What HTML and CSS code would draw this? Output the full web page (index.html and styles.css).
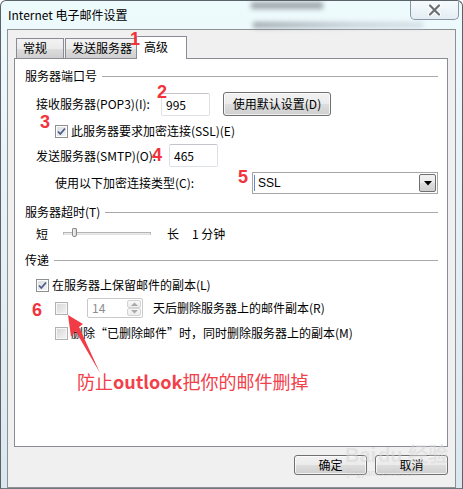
FILE: index.html
```html
<!DOCTYPE html>
<html lang="zh-CN">
<head>
<meta charset="utf-8">
<title>Internet 电子邮件设置</title>
<link rel="stylesheet" href="styles.css">
</head>
<body>
<div class="window">
  <div class="titlebar">
    <span class="title">Internet 电子邮件设置</span>
    <div class="close">
      <svg width="13" height="12" viewBox="0 0 13 12">
        <path d="M2 1.5 L11 10.5 M11 1.5 L2 10.5" stroke="#ffffff" stroke-width="4.2" stroke-linecap="round"/>
        <path d="M2 1.5 L11 10.5 M11 1.5 L2 10.5" stroke="#6b6f74" stroke-width="2.2" stroke-linecap="round"/>
      </svg>
    </div>
  </div>
  <div class="client">
    <div class="tabs">
      <div class="tab w48">常规</div>
      <div class="tab w72">发送服务器</div>
      <div class="tab active">高级</div>
    </div>
    <div class="panel">
      <div class="group-head"><span>服务器端口号</span><i class="rule"></i></div>
      <div class="row r-recv">
        <span class="label lw125">接收服务器(POP3)(I):</span>
        <div class="textbox">995</div>
        <div class="btn btn-default">使用默认设置(D)</div>
      </div>
      <div class="row r-check ind2">
        <span class="cb"><svg width="11" height="11" viewBox="0 0 11 11"><path d="M2 5.5 L4.3 8 L9 2.5" fill="none" stroke="#4b5d8a" stroke-width="1.8"/></svg></span>
        <span class="cb-text">此服务器要求加密连接(SSL)(E)</span>
      </div>
      <div class="row r-send">
        <span class="label lw133">发送服务器(SMTP)(O):</span>
        <div class="textbox">465</div>
      </div>
      <div class="row r-combo ind2">
        <span class="label lw197">使用以下加密连接类型(C):</span>
        <div class="combo">
          <span class="caret"></span><span class="combo-val">SSL</span>
          <span class="drop"><svg width="8" height="5" viewBox="0 0 8 5"><path d="M0 0 H8 L4 4.5 Z" fill="#000"/></svg></span>
        </div>
      </div>
      <div class="group-head gh2"><span>服务器超时(T)</span><i class="rule"></i></div>
      <div class="row r-slider">
        <span class="short">短</span>
        <div class="track"><span class="thumb"></span></div>
        <span class="long">长</span>
        <span class="minutes">1 分钟</span>
      </div>
      <div class="group-head gh3"><span>传递</span><i class="rule"></i></div>
      <div class="row r-check ind1 r-keep">
        <span class="cb"><svg width="11" height="11" viewBox="0 0 11 11"><path d="M2 5.5 L4.3 8 L9 2.5" fill="none" stroke="#4b5d8a" stroke-width="1.8"/></svg></span>
        <span class="cb-text">在服务器上保留邮件的副本(L)</span>
      </div>
      <div class="row r-days ind2">
        <span class="cb cb-dis"></span>
        <div class="spin">
          <span class="spin-val">14</span>
          <span class="spin-btns">
            <span class="sb"><svg width="7" height="4" viewBox="0 0 7 4"><path d="M0 4 H7 L3.5 0.5 Z" fill="#a9a9a9"/></svg></span>
            <span class="sb"><svg width="7" height="4" viewBox="0 0 7 4"><path d="M0 0 H7 L3.5 3.5 Z" fill="#a9a9a9"/></svg></span>
          </span>
        </div>
        <span class="days-text">天后删除服务器上的邮件副本(R)</span>
      </div>
      <div class="row r-check ind2 r-del">
        <span class="cb cb-dis"></span>
        <span class="cb-text">删除“已删除邮件”时，同时删除服务器上的副本(M)</span>
      </div>
    </div>
    <div class="footer">
      <div class="btn btn-foot">确定</div>
      <div class="btn btn-foot">取消</div>
    </div>
  </div>

  <span class="mark m1">1</span>
  <span class="mark m2">2</span>
  <span class="mark m3">3</span>
  <span class="mark m4">4</span>
  <span class="mark m5">5</span>
  <span class="mark m6">6</span>
  <svg class="arrow" width="463" height="489" viewBox="0 0 463 489">
    <path d="M68 315 L83 324 L79 327 L100 373 L75.5 331 L71 337 Z" fill="#f23c45"/>
  </svg>
  <span class="note">防止<b class="note-latin">outlook</b>把你的邮件删掉</span>
  <span class="watermark">Bai<span class="wm-du">du</span> 经验</span>
  <span class="watermark-sub">jingyan.baidu.com</span>
</div>
</body>
</html>
```
FILE: styles.css
```css
html, body {
  margin: 0;
  padding: 0;
}
body {
  width: 463px;
  height: 489px;
  overflow: hidden;
  background: #ffffff;
  font-family: "Noto Sans CJK SC", "Noto Sans", sans-serif;
  font-size: 12px;
  color: #000;
}
.window {
  position: relative;
  width: 463px;
  height: 489px;
  box-sizing: border-box;
  border: 1px solid #5a6168;
  border-bottom-color: #70777e;
  border-radius: 6px 6px 0 0;
  padding: 0 6px;
  display: flex;
  flex-direction: column;
  background: linear-gradient(180deg, #eefbfd 0%, #e9f4f8 30%, #e2edf3 70%, #dbe7ef 100%);
  overflow: hidden;
}
.titlebar {
  position: relative;
  height: 28px;
  flex: none;
  display: flex;
  align-items: center;
}
.titlebar::before {
  content: "";
  position: absolute;
  left: 244px;
  top: 1px;
  width: 72px;
  height: 7px;
  background: #8a9298;
  filter: blur(2.5px);
  opacity: 0.8;
}
.titlebar::after {
  content: "";
  position: absolute;
  left: 246px;
  top: 21px;
  width: 170px;
  height: 6px;
  background: linear-gradient(90deg, #7d858c, #b7c2cc 60%, #c9d3dc);
  filter: blur(2.5px);
  opacity: 0.7;
}
.title {
  position: relative;
  z-index: 1;
  margin-left: 1px;
  line-height: 16px;
  font-size: 12px;
  color: #000;
}
.close {
  position: relative;
  z-index: 1;
  margin-left: auto;
  margin-right: -3px;
  align-self: flex-start;
  margin-top: -1px;
  width: 49px;
  height: 20px;
  box-sizing: border-box;
  border: 1px solid #8a96a3;
  border-top: none;
  border-radius: 0 0 5px 5px;
  background: linear-gradient(180deg, #f6fbfd 0%, #eef5f9 50%, #e3edf3 100%);
  display: flex;
  align-items: center;
  justify-content: center;
}
.client {
  flex: 1;
  box-sizing: border-box;
  border: 1px solid #8d9196;
  background: #f0f0f0;
  padding: 6px 7px 0 6px;
  display: flex;
  flex-direction: column;
}
.tabs {
  display: flex;
  align-items: flex-end;
  height: 22px;
  margin-left: 2px;
  position: relative;
  z-index: 2;
}
.tab {
  box-sizing: border-box;
  height: 20px;
  border: 1px solid #898c95;
  border-bottom: none;
  background: linear-gradient(180deg, #f3f3f3 0%, #ebebeb 50%, #dddddd 51%, #cfcfcf 100%);
  padding-left: 6px;
  line-height: 18px;
  font-size: 12px;
}
.tab + .tab {
  margin-left: 1px;
}
.w48 { width: 48px; }
.w72 { width: 72px; }
.tab.active {
  width: 51px;
  height: 23px;
  margin-left: -1px;
  margin-bottom: -1px;
  background: #ffffff;
  padding-left: 7px;
  line-height: 19px;
}
.panel {
  flex: none;
  position: relative;
  z-index: 1;
  height: 389px;
  box-sizing: border-box;
  border: 1px solid #898c95;
  background: #ffffff;
  padding: 9px 9px 0 10px;
  display: flex;
  flex-direction: column;
}
.group-head {
  display: flex;
  align-items: center;
  height: 16px;
  line-height: 16px;
  gap: 5px;
}
.group-head .rule {
  flex: 1;
  height: 1px;
  background: #a9a9a9;
}
.gh2 { margin-top: 10px; }
.gh3 { margin-top: 10px; }
.row {
  display: flex;
  align-items: center;
  line-height: 16px;
}
.label { flex: none; }
.lw125 { width: 125px; }
.lw133 { width: 133px; }
.lw197 { width: 197px; }
.r-recv {
  margin-top: 8px;
  height: 24px;
  padding-left: 11px;
  align-items: center;
}
.r-send {
  margin-top: 6px;
  height: 23px;
  padding-left: 11px;
}
.textbox {
  box-sizing: border-box;
  width: 49px;
  height: 23px;
  border: 1px solid #dde1e6;
  border-top-color: #c3c7cd;
  border-radius: 2px;
  padding-left: 4px;
  line-height: 21px;
  background: #fff;
}
.btn {
  box-sizing: border-box;
  border: 1px solid #707070;
  border-radius: 3px;
  background: linear-gradient(180deg, #f2f2f2 0%, #ebebeb 48%, #dddddd 52%, #cfcfcf 100%);
  box-shadow: inset 0 0 0 1px rgba(255,255,255,0.7);
  text-align: center;
  font-size: 12px;
}
.btn-default {
  margin-left: 13px;
  width: 108px;
  height: 24px;
  line-height: 22px;
}
.r-check {
  height: 14px;
}
.ind1 { padding-left: 11px; }
.ind2 { padding-left: 30px; }
.r-recv + .r-check { margin-top: 8px; }
.cb {
  flex: none;
  width: 13px;
  height: 13px;
  box-sizing: border-box;
  border: 1px solid #8e8f8f;
  background: linear-gradient(135deg, #dadde1 0%, #f3f4f5 100%);
  box-shadow: inset 0 0 0 1px #ffffff;
  display: flex;
  align-items: center;
  justify-content: center;
}
.cb svg { display: block; }
.cb-dis {
  border-color: #b1b1b1;
  background: linear-gradient(135deg, #d6d6d6 0%, #f4f4f4 100%);
  box-shadow: inset 0 0 0 1px #f7f7f7;
}
.cb-text {
  margin-left: 3px;
  white-space: nowrap;
}
.r-combo {
  margin-top: 5px;
  height: 22px;
}
.combo {
  position: relative;
  box-sizing: border-box;
  width: 186px;
  height: 22px;
  border: 1px solid #a6a6a6;
  background: #fff;
  display: flex;
  align-items: center;
}
.caret {
  width: 1px;
  height: 16px;
  margin-left: 1px;
  background: #5d8ad6;
}
.combo-val {
  margin-left: 3px;
  font-family: "Liberation Sans", "Noto Sans", sans-serif;
  font-size: 12px;
}
.drop {
  margin-left: auto;
  margin-right: 1px;
  width: 17px;
  height: 18px;
  box-sizing: border-box;
  border: 1px solid #707070;
  border-radius: 2px;
  background: linear-gradient(180deg, #f2f2f2 0%, #ebebeb 48%, #dddddd 52%, #cfcfcf 100%);
  display: flex;
  align-items: center;
  justify-content: center;
}
.drop svg { display: block; }
.r-slider {
  margin-top: 6px;
  height: 16px;
  padding-left: 11px;
}
.short { width: 12px; }
.track {
  position: relative;
  margin-left: 15px;
  width: 88px;
  height: 3px;
  box-sizing: border-box;
  border: 1px solid #b5b5b5;
  border-bottom-color: #e0e0e0;
  background: #e7eaea;
  margin-top: -1px;
}
.thumb {
  position: absolute;
  left: 8px;
  top: -5px;
  width: 5px;
  height: 9px;
  box-sizing: border-box;
  border: 1px solid #8a8a8a;
  border-radius: 1px 1px 2px 2px;
  background: linear-gradient(90deg, #f4f4f4, #d7d7d7);
}
.long { margin-left: 16px; }
.minutes { margin-left: 13px; }
.r-keep { margin-top: 10px; }
.r-days {
  margin-top: 6px;
  height: 20px;
}
.spin {
  margin-left: 19px;
  width: 56px;
  height: 20px;
  box-sizing: border-box;
  border: 1px solid #c9c9c9;
  border-radius: 2px;
  background: #fff;
  display: flex;
  align-items: center;
}
.spin-val {
  margin-left: 4px;
  color: #8d8d8d;
  font-size: 12px;
}
.spin-btns {
  margin-left: auto;
  margin-right: 1px;
  width: 14px;
  height: 16px;
  display: flex;
  flex-direction: column;
  gap: 0;
}
.sb {
  flex: 1;
  box-sizing: border-box;
  border: 1px solid #d4d4d4;
  border-radius: 2px;
  background: linear-gradient(180deg, #f8f8f8, #ececec);
  display: flex;
  align-items: center;
  justify-content: center;
}
.sb svg { display: block; }
.days-text { margin-left: 10px; }
.r-del { margin-top: 8px; }
.footer {
  margin-top: 8px;
  display: flex;
  justify-content: flex-end;
  gap: 8px;
}
.btn-foot {
  width: 73px;
  height: 20px;
  line-height: 18px;
}
.mark {
  position: absolute;
  z-index: 5;
  font-family: "Liberation Sans", Arial, sans-serif;
  font-weight: bold;
  font-size: 18px;
  line-height: 18px;
  color: #f2333d;
}
.m1 { left: 129px; top: 29px; }
.m2 { left: 156px; top: 82px; }
.m3 { left: 39px; top: 112px; }
.m4 { left: 151px; top: 145px; }
.m5 { left: 237px; top: 167px; }
.m6 { left: 31px; top: 300px; }
.arrow {
  position: absolute;
  left: -1px;
  top: -1px;
  z-index: 5;
}
.note {
  position: absolute;
  z-index: 5;
  left: 76px;
  top: 371px;
  font-size: 18px;
  line-height: 18px;
  color: #f2404b;
  white-space: nowrap;
}
.note-latin {
  font-weight: bold;
}
.watermark {
  position: absolute;
  z-index: 6;
  left: 344px;
  top: 444px;
  font-family: "Liberation Sans", sans-serif;
  font-weight: bold;
  font-size: 20px;
  line-height: 20px;
  color: rgba(215, 215, 215, 0.55);
  white-space: nowrap;
}
.wm-du { margin-left: 2px; }
.watermark-sub {
  position: absolute;
  z-index: 6;
  left: 346px;
  top: 467px;
  font-family: "Liberation Sans", sans-serif;
  font-size: 9px;
  line-height: 10px;
  color: rgba(200, 200, 200, 0.55);
  white-space: nowrap;
}
```
